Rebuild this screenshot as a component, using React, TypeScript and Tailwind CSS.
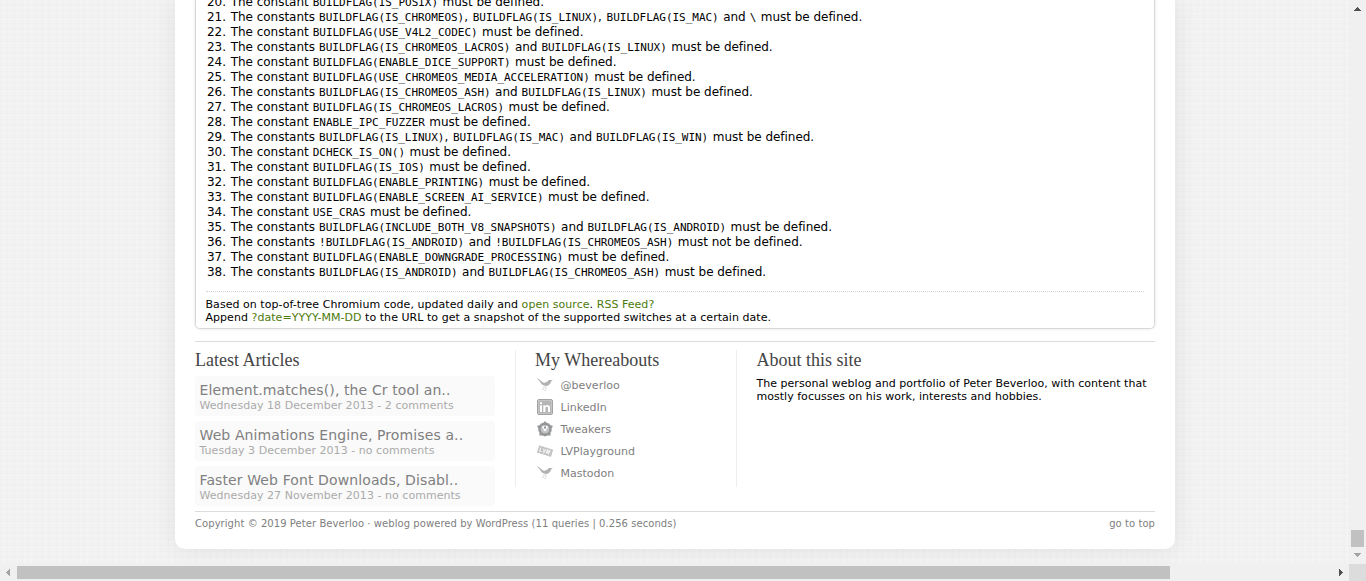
import type { ReactNode } from "react";

type Row = { no: number; flags: string[]; verb?: string };

const rows: Row[] = [
  { no: 20, flags: ["BUILDFLAG(IS_POSIX)"] },
  { no: 21, flags: ["BUILDFLAG(IS_CHROMEOS)", "BUILDFLAG(IS_LINUX)", "BUILDFLAG(IS_MAC)", "\\"] },
  { no: 22, flags: ["BUILDFLAG(USE_V4L2_CODEC)"] },
  { no: 23, flags: ["BUILDFLAG(IS_CHROMEOS_LACROS)", "BUILDFLAG(IS_LINUX)"] },
  { no: 24, flags: ["BUILDFLAG(ENABLE_DICE_SUPPORT)"] },
  { no: 25, flags: ["BUILDFLAG(USE_CHROMEOS_MEDIA_ACCELERATION)"] },
  { no: 26, flags: ["BUILDFLAG(IS_CHROMEOS_ASH)", "BUILDFLAG(IS_LINUX)"] },
  { no: 27, flags: ["BUILDFLAG(IS_CHROMEOS_LACROS)"] },
  { no: 28, flags: ["ENABLE_IPC_FUZZER"] },
  { no: 29, flags: ["BUILDFLAG(IS_LINUX)", "BUILDFLAG(IS_MAC)", "BUILDFLAG(IS_WIN)"] },
  { no: 30, flags: ["DCHECK_IS_ON()"] },
  { no: 31, flags: ["BUILDFLAG(IS_IOS)"] },
  { no: 32, flags: ["BUILDFLAG(ENABLE_PRINTING)"] },
  { no: 33, flags: ["BUILDFLAG(ENABLE_SCREEN_AI_SERVICE)"] },
  { no: 34, flags: ["USE_CRAS"] },
  { no: 35, flags: ["BUILDFLAG(INCLUDE_BOTH_V8_SNAPSHOTS)", "BUILDFLAG(IS_ANDROID)"] },
  { no: 36, flags: ["!BUILDFLAG(IS_ANDROID)", "!BUILDFLAG(IS_CHROMEOS_ASH)"], verb: "must not be defined." },
  { no: 37, flags: ["BUILDFLAG(ENABLE_DOWNGRADE_PROCESSING)"] },
  { no: 38, flags: ["BUILDFLAG(IS_ANDROID)", "BUILDFLAG(IS_CHROMEOS_ASH)"] },
];

const articles = [
  ["Element.matches(), the Cr tool an..", "Wednesday 18 December 2013 - 2 comments"],
  ["Web Animations Engine, Promises a..", "Tuesday 3 December 2013 - no comments"],
  ["Faster Web Font Downloads, Disabl..", "Wednesday 27 November 2013 - no comments"],
];

function ConditionRow({ no, flags, verb = "must be defined." }: Row) {
  const many = flags.length > 1;
  return (
    <li className="flex h-[15px] whitespace-pre">
      <span className="w-[23.7px] shrink-0">{no}.</span>
      <span className={many ? "w-[88.4px] shrink-0" : "w-[82px] shrink-0"}>{many ? "The constants" : "The constant"}</span>
      {flags.map((flag, i) => (
        <span key={flag} className="flex">
          {i > 0 && i === flags.length - 1 && <span className="w-[31px] shrink-0 pl-[4.5px]">and</span>}
          <code className="font-['DejaVu_Sans_Mono',monospace] text-[11px] tracking-[-0.026px]">{flag}</code>
          {i < flags.length - 2 && <span className="w-[8.5px] shrink-0">,</span>}
        </span>
      ))}
      <span className="pl-[4.5px]">{verb}</span>
    </li>
  );
}

function Bird() {
  return (
    <svg width="16" height="16" viewBox="0 0 16 16">
      <path d="M0.2 1 L6.2 5.4 C7.6 5.9 9.4 5.6 10.4 4.6 C11 3.2 12.3 2.6 13.6 3 L15.8 3 L14.2 4.2 C13.8 6.6 11.8 8.6 9 8.9 C6.6 8.8 4.8 7.6 4 6.3 L2.6 4.2 L0.8 2.6 Z" fill="#b0b2b3" />
      <path d="M7.2 8.8 L6.6 12 M9 8.9 L8.8 12.6 M4.8 12.6 H6.6 M7.4 13.4 H9" stroke="#d0d0d0" strokeWidth="0.8" fill="none" />
    </svg>
  );
}

function LinkedInBadge() {
  return (
    <svg width="16" height="16" viewBox="0 0 16 16">
      <rect x="0.5" y="0.5" width="15" height="15" rx="1.5" fill="#b5b5b5" stroke="#a2a2a2" />
      <rect x="1.5" y="1.5" width="13" height="13" fill="none" stroke="#cccccc" strokeWidth="0.7" />
      <path d="M3 6.2H5V13H3Z M3 3.2H5V5H3Z M6.3 6.2H8.3V7.2C9.5 5.3 13 5.7 13 8.5V13H11V9C11 7.2 8.4 7.2 8.4 9V13H6.3Z" fill="#fff" />
    </svg>
  );
}

function Gear() {
  return (
    <svg width="16" height="16" viewBox="0 0 16 16">
      <path d="M8 0 L9.6 1.7 L12 2.4 L13.2 3.9 L16 5 L14.6 7.4 L14.6 10 L13.6 11.6 L13.6 14.6 L10.6 14.4 L8 15.6 L5.4 14.4 L2.4 14.6 L2.4 11.6 L1.4 10 L1.4 7.4 L0 5 L2.8 3.9 L4 2.4 L6.4 1.7Z" fill="#97999a" />
      <circle cx="8" cy="8.2" r="4.9" fill="#c0c2c3" stroke="#8b8d8e" strokeWidth="0.9" />
      <path d="M5.3 5 H10.7 V7.2 L9.4 8 V9.6 L8 10.4 L6.6 9.6 V8 L5.3 7.2Z" fill="#fafafa" />
      <path d="M7 5.6H9V7.6H7Z" fill="#8f9192" />
    </svg>
  );
}

function Ticket() {
  return (
    <svg width="16" height="16" viewBox="0 0 16 16">
      <g transform="rotate(17 8 8)">
        <rect x="0.8" y="4.8" width="14.6" height="6.6" fill="#c3c3c3" />
        <path d="M3 6V9.8H5M6.2 6L7.3 9.8L8.5 6M10 10.2V6.2H12.6V8H10.4L12.8 10.2" fill="none" stroke="#f7f7f7" strokeWidth="1" />
        <path d="M1 4.8H15.4M1 11.4H15.4" stroke="#b4b4b4" strokeWidth="0.7" strokeDasharray="2 1" />
      </g>
    </svg>
  );
}

const links: { label: string; icon: ReactNode }[] = [
  { label: "@beverloo", icon: <Bird /> },
  { label: "LinkedIn", icon: <LinkedInBadge /> },
  { label: "Tweakers", icon: <Gear /> },
  { label: "LVPlayground", icon: <Ticket /> },
  { label: "Mastodon", icon: <Bird /> },
];

function Heading({ children }: { children: ReactNode }) {
  return <h2 className="h-[26px] font-['Liberation_Serif',serif] text-[18px] leading-[21px] text-[#444]">{children}</h2>;
}

export default function App() {
  return (
    <div className="grid h-[581px] w-[1366px] grid-cols-[1349px_17px] grid-rows-[564px_17px] overflow-hidden bg-[#f0f0f0] font-['DejaVu_Sans',sans-serif] text-black">
      <main className="overflow-hidden bg-[#f2f2f2] bg-[repeating-linear-gradient(90deg,rgba(0,0,0,0.006)_0px_1px,transparent_1px_3px,rgba(255,255,255,0.12)_3px_4px,transparent_4px_7px),repeating-linear-gradient(0deg,rgba(0,0,0,0.006)_0px_1px,transparent_1px_4px,rgba(255,255,255,0.12)_4px_5px,transparent_5px_6px)] pl-[175px]">
        <div className="h-[549px] w-[1000px] rounded-b-[10px] bg-white px-5 shadow-[0_0_25px_rgba(0,0,0,0.08)]">
          <section className="h-[329px] overflow-hidden rounded-b-[5px] border border-t-0 border-[#d8d8d8] px-[10px] shadow-[0_0_3px_rgba(0,0,0,0.12)]">
            <ol className="-mt-[5px] pl-[1px] text-[12px] leading-[15px] tracking-[-0.03px]">
              {rows.map((row) => (
                <ConditionRow key={row.no} {...row} />
              ))}
            </ol>
            <p className="-ml-[0.5px] mt-[11px] border-t border-dotted border-[#d5d5d5] pt-[6px] text-[11px] leading-[13px] tracking-[0.045px]">
              Based on top-of-tree Chromium code, updated daily and <a className="text-[#4c7a0b]">open source</a>. <a className="text-[#4c7a0b]">RSS Feed?</a>
              <br />
              Append <a className="text-[#4c7a0b]">?date=YYYY-MM-DD</a> to the URL to get a snapshot of the supported switches at a certain date.
            </p>
          </section>
          <div className="mt-3 flex h-[170px] border-t border-[#dcdcdc] pt-2">
            <section className="w-[320px]">
              <Heading>Latest Articles</Heading>
              <div className="flex w-[300px] flex-col gap-[5px]">
                {articles.map(([title, date]) => (
                  <article key={title} className="h-10 whitespace-nowrap rounded-[3px] bg-[#fafafa] pl-[4.5px] pt-[5px]">
                    <h3 className="text-[14px] leading-[18px] tracking-[0.11px] text-[#808080]">{title}</h3>
                    <p className="text-[11px] leading-[13px] tracking-[0.04px] text-[#aaa]">{date}</p>
                  </article>
                ))}
              </div>
            </section>
            <section className="h-[137px] w-[221px] border-l border-[#eee] pl-[19px]">
              <Heading>My Whereabouts</Heading>
              <ul className="-mt-[2px]">
                {links.map(({ label, icon }) => (
                  <li key={label} className="flex h-[22px] items-center gap-[7.5px] pl-[2px] text-[11px] leading-[13px] tracking-[0.02px] text-[#808080]">
                    {icon}
                    <span>{label}</span>
                  </li>
                ))}
              </ul>
            </section>
            <section className="h-[137px] w-[419px] whitespace-nowrap border-l border-[#eee] pl-[19.5px]">
              <Heading>About this site</Heading>
              <p className="pt-px text-[11px] leading-[13px] tracking-[0.025px]">
                The personal weblog and portfolio of Peter Beverloo, with content that
                <br />
                mostly focusses on his work, interests and hobbies.
              </p>
            </section>
          </div>
          <footer className="flex justify-between border-t border-[#dcdcdc] pt-[5px] text-[10px] leading-[13px] tracking-[0.06px] text-[#808080]">
            <span>Copyright © 2019 Peter Beverloo · weblog powered by WordPress (11 queries | 0.256 seconds)</span>
            <a>go to top</a>
          </footer>
        </div>
      </main>
      <div className="flex flex-col items-center">
        <svg className="mt-[7px] shrink-0" width="7" height="4" viewBox="0 0 7 4" shapeRendering="crispEdges">
          <path d="M0 4V3H1V2H2V1H3V0H4V1H5V2H6V3H7V4Z" fill="#505050" />
        </svg>
        <div className="mt-[519px] h-[17px] w-[13px] shrink-0 bg-[#c1c1c1]" />
        <svg className="mt-[6px] shrink-0" width="7" height="4" viewBox="0 0 7 4" shapeRendering="crispEdges">
          <path d="M0 0V1H1V2H2V3H3V4H4V3H5V2H6V1H7V0Z" fill="#a3a3a3" />
        </svg>
      </div>
      <div className="flex items-center">
        <svg className="ml-[6px] shrink-0" width="4" height="7" viewBox="0 0 4 7" shapeRendering="crispEdges">
          <path d="M4 0H3V1H2V2H1V3H0V4H1V5H2V6H3V7H4Z" fill="#a3a3a3" />
        </svg>
        <div className="ml-[7px] h-[13px] w-[1153px] shrink-0 bg-[#c1c1c1]" />
        <svg className="ml-[169px] shrink-0" width="4" height="7" viewBox="0 0 4 7" shapeRendering="crispEdges">
          <path d="M0 0H1V1H2V2H3V3H4V4H3V5H2V6H1V7H0Z" fill="#505050" />
        </svg>
      </div>
      <div className="bg-[#dcdcdc]" />
    </div>
  );
}
